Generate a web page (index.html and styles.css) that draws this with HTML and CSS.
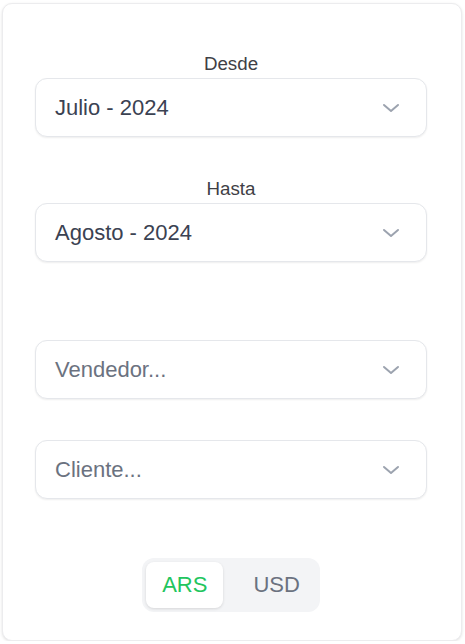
FILE: index.html
```html
<!DOCTYPE html>
<html lang="es">

<head>
  <meta charset="UTF-8">
  <meta name="viewport" content="width=device-width, initial-scale=1.0">
  <title>Filtros</title>

  <link rel="stylesheet" href="styles.css">
</head>

<body>
  <main class="card">
    <div class="field">
      <label class="field-label">Desde</label>
      <button class="select">
        <span class="select-value">Julio - 2024</span>
        <svg class="chevron" viewBox="0 0 18 10" width="18" height="10">
          <polyline points="2,2 9,8 16,2" />
        </svg>
      </button>
    </div>

    <div class="field">
      <label class="field-label">Hasta</label>
      <button class="select">
        <span class="select-value">Agosto - 2024</span>
        <svg class="chevron" viewBox="0 0 18 10" width="18" height="10">
          <polyline points="2,2 9,8 16,2" />
        </svg>
      </button>
    </div>

    <div class="field field-spaced">
      <button class="select">
        <span class="select-value placeholder">Vendedor...</span>
        <svg class="chevron" viewBox="0 0 18 10" width="18" height="10">
          <polyline points="2,2 9,8 16,2" />
        </svg>
      </button>
    </div>

    <div class="field">
      <button class="select">
        <span class="select-value placeholder">Cliente...</span>
        <svg class="chevron" viewBox="0 0 18 10" width="18" height="10">
          <polyline points="2,2 9,8 16,2" />
        </svg>
      </button>
    </div>

    <div class="currency">
      <button class="currency-btn active">ARS</button>
      <button class="currency-btn">USD</button>
    </div>
  </main>
</body>

</html>
```

FILE: styles.css
```css
* {
  box-sizing: border-box;
}

body {
  margin: 0;
  padding: 3px 3px 0 2px;
  background: #fff;
  font-family: "Liberation Sans", Arial, sans-serif;
}

.card {
  display: flex;
  flex-direction: column;
  height: 638px;
  padding: 49px 34px 0 32px;
  background: #fff;
  border: 1px solid #ececee;
  border-radius: 10px;
  box-shadow: 0 1px 3px rgba(0, 0, 0, 0.12);
}

.field {
  display: flex;
  flex-direction: column;
  margin-bottom: 41px;
}

.field-spaced {
  margin-top: 37px;
}

.field-label {
  align-self: center;
  margin-bottom: 3px;
  color: #3f3f46;
  font-size: 18.75px;
  line-height: 22px;
}

.select {
  display: flex;
  align-items: center;
  justify-content: space-between;
  height: 59px;
  padding: 0 26px 0 19px;
  background: #fff;
  border: 1px solid #e5e7eb;
  border-radius: 12px;
  box-shadow: 0 1px 2px rgba(0, 0, 0, 0.07);
  font-family: inherit;
  cursor: pointer;
}

.select-value {
  color: #3b4252;
  font-size: 22px;
}

.select-value.placeholder {
  color: #6b7280;
}

.chevron {
  fill: none;
  stroke: #9ca3af;
  stroke-width: 2;
  stroke-linecap: round;
  stroke-linejoin: round;
}

.currency {
  display: flex;
  align-self: center;
  gap: 14px;
  margin-top: 18px;
  padding: 4px;
  background: #f3f4f6;
  border-radius: 12px;
}

.currency-btn {
  height: 46px;
  padding: 0 16px;
  background: transparent;
  border: none;
  border-radius: 8px;
  color: #6b7280;
  font-family: inherit;
  font-size: 22px;
  cursor: pointer;
}

.currency-btn.active {
  background: #fff;
  color: #22c55e;
  box-shadow: 0 1px 3px rgba(0, 0, 0, 0.12);
}
```
